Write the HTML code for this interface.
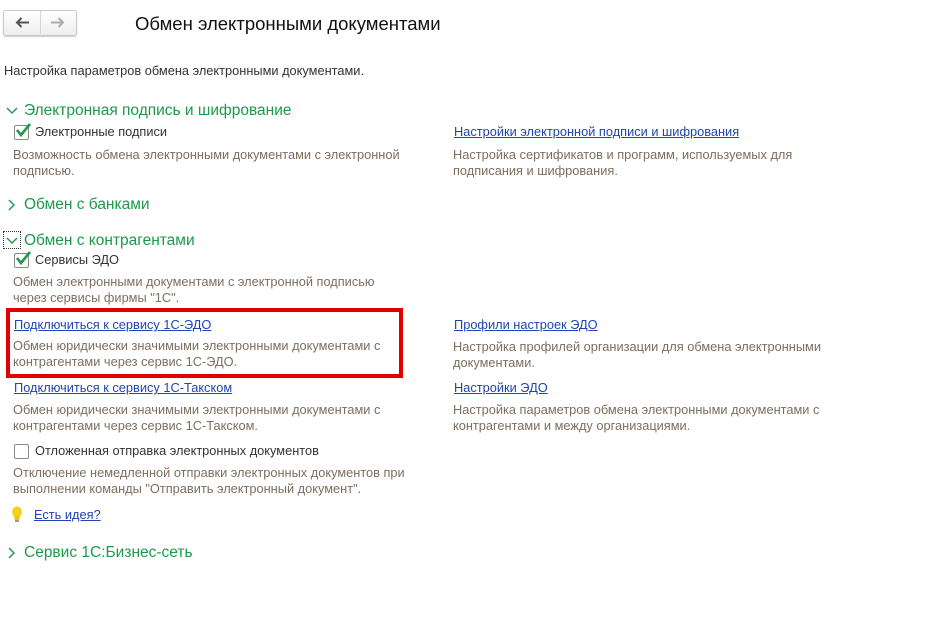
<!DOCTYPE html>
<html><head><meta charset="utf-8"><style>
body{margin:0;width:950px;height:628px;background:#fff;position:relative;font-family:"Liberation Sans",Arial,sans-serif;overflow:hidden}
.t{position:absolute;font-size:12.8px;line-height:16px;white-space:nowrap;color:#333}
.d{color:#7d6e5e}
.l{color:#1f44b5;text-decoration:underline}
.h{position:absolute;font-size:15.5px;line-height:18px;color:#1c9a4a;white-space:nowrap}
.cb{position:absolute;width:13px;height:13px;border:1px solid #8a8a8a;border-radius:2px;background:#fff}
.chev{position:absolute}
</style></head><body>
<div style="position:absolute;left:3px;top:10px;width:72px;height:24px;border:1px solid #c8c8c8;border-radius:3px;background:linear-gradient(#fff,#eee);box-shadow:0 1px 1px #ccc"></div>
<div style="position:absolute;left:40px;top:11px;width:1px;height:23px;background:#d6d6d6"></div>
<svg style="position:absolute;left:15px;top:17px" width="16" height="12"><path d="M2 5.5H14M6.5 1L2 5.5L6.5 10" stroke="#555" stroke-width="2" fill="none"/></svg>
<svg style="position:absolute;left:50px;top:17px" width="16" height="12"><path d="M1 5.5H13M8.5 1L13 5.5L8.5 10" stroke="#aaa" stroke-width="2" fill="none"/></svg>
<div style="position:absolute;left:135px;top:13px;font-size:18.5px;line-height:22px;color:#111;white-space:nowrap">Обмен электронными документами</div>
<div class="t" style="left:4px;top:63px">Настройка параметров обмена электронными документами.</div>

<svg class="chev" style="left:6px;top:106px" width="12" height="10"><path d="M1 2L6 7L11 2" stroke="#1c9a4a" stroke-width="1.4" fill="none"/></svg>
<div class="h" style="left:24px;top:102px">Электронная подпись и шифрование</div>
<div class="cb" style="left:14px;top:125px"></div>
<svg style="position:absolute;left:14px;top:122px" width="18" height="16"><path d="M3 8L7 13L16 2" stroke="#1a9a4a" stroke-width="2.6" fill="none"/></svg>
<div class="t" style="left:35px;top:124px">Электронные подписи</div>
<div class="t d" style="left:13px;top:147px">Возможность обмена электронными документами с электронной<br>подписью.</div>
<div class="t l" style="left:454px;top:124px">Настройки электронной подписи и шифрования</div>
<div class="t d" style="left:453px;top:147px">Настройка сертификатов и программ, используемых для<br>подписания и шифрования.</div>

<svg class="chev" style="left:7px;top:199px" width="10" height="12"><path d="M2 1L7 6L2 11" stroke="#1c9a4a" stroke-width="1.4" fill="none"/></svg>
<div class="h" style="left:24px;top:196px">Обмен с банками</div>

<div style="position:absolute;left:3px;top:231px;width:16px;height:16px;border:1px dotted #333"></div>
<svg class="chev" style="left:6px;top:236px" width="12" height="10"><path d="M1 2L6 7L11 2" stroke="#1c9a4a" stroke-width="1.4" fill="none"/></svg>
<div class="h" style="left:24px;top:232px">Обмен с контрагентами</div>
<div class="cb" style="left:14px;top:253px"></div>
<svg style="position:absolute;left:14px;top:250px" width="18" height="16"><path d="M3 8L7 13L16 2" stroke="#1a9a4a" stroke-width="2.6" fill="none"/></svg>
<div class="t" style="left:35px;top:252px">Сервисы ЭДО</div>
<div class="t d" style="left:13px;top:274px">Обмен электронными документами с электронной подписью<br>через сервисы фирмы "1С".</div>

<div style="position:absolute;left:6px;top:308px;width:389px;height:62px;border:4px solid #e00000"></div>
<div class="t l" style="left:14px;top:317px">Подключиться к сервису 1С-ЭДО</div>
<div class="t d" style="left:13px;top:338px">Обмен юридически значимыми электронными документами с<br>контрагентами через сервис 1С-ЭДО.</div>
<div class="t l" style="left:454px;top:317px">Профили настроек ЭДО</div>
<div class="t d" style="left:453px;top:339px">Настройка профилей организации для обмена электронными<br>документами.</div>

<div class="t l" style="left:14px;top:380px">Подключиться к сервису 1С-Такском</div>
<div class="t d" style="left:13px;top:402px">Обмен юридически значимыми электронными документами с<br>контрагентами через сервис 1С-Такском.</div>
<div class="t l" style="left:454px;top:380px">Настройки ЭДО</div>
<div class="t d" style="left:453px;top:402px">Настройка параметров обмена электронными документами с<br>контрагентами и между организациями.</div>

<div class="cb" style="left:14px;top:444px"></div>
<div class="t" style="left:35px;top:443px">Отложенная отправка электронных документов</div>
<div class="t d" style="left:13px;top:465px">Отключение немедленной отправки электронных документов при<br>выполнении команды "Отправить электронный документ".</div>

<svg style="position:absolute;left:11px;top:506px" width="12" height="18"><ellipse cx="6" cy="6" rx="5" ry="5.5" fill="#f5d020"/><rect x="3.5" y="10" width="5" height="4" fill="#f0c400"/><rect x="4" y="14" width="4" height="2" fill="#999"/></svg>
<div class="t l" style="left:34px;top:507px">Есть идея?</div>

<svg class="chev" style="left:7px;top:547px" width="10" height="12"><path d="M2 1L7 6L2 11" stroke="#1c9a4a" stroke-width="1.4" fill="none"/></svg>
<div class="h" style="left:24px;top:544px">Сервис 1С:Бизнес-сеть</div>
</body></html>
